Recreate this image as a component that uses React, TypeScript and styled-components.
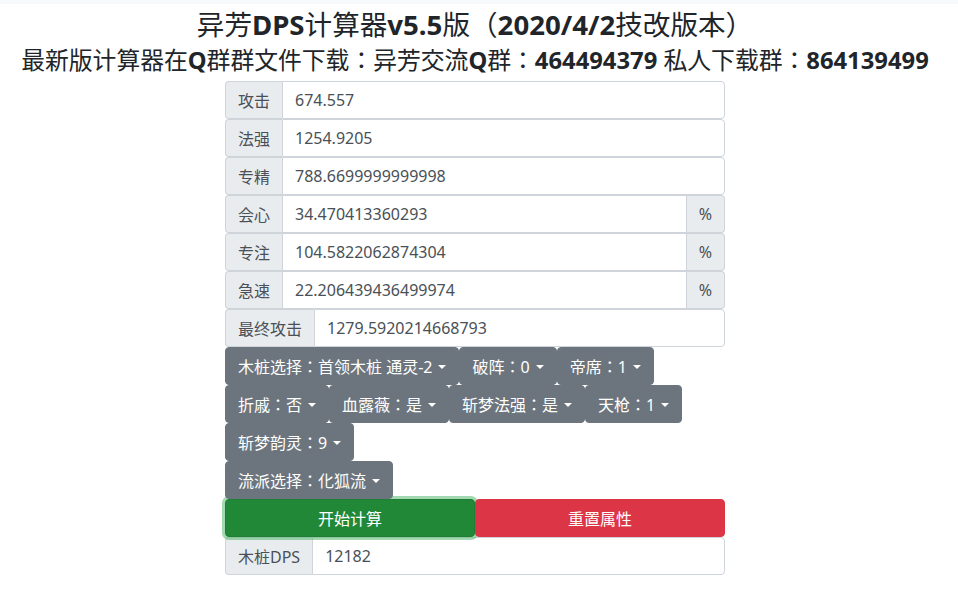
import React from 'react';
import styled, { createGlobalStyle } from 'styled-components';

const GlobalStyle = createGlobalStyle`
    body {
        margin: 0;
        background: #ffffff;
        font-family: 'Noto Sans', 'Noto Sans CJK JP', sans-serif;
        color: #212529;
    }
`;

const stats = [
    { label: '攻击', value: '674.557' },
    { label: '法强', value: '1254.9205' },
    { label: '专精', value: '788.6699999999998' },
    { label: '会心', value: '34.470413360293', unit: '%' },
    { label: '专注', value: '104.5822062874304', unit: '%' },
    { label: '急速', value: '22.206439436499974', unit: '%' },
    { label: '最终攻击', value: '1279.5920214668793' },
];

const toggles = [
    '木桩选择：首领木桩 通灵-2',
    '破阵：0',
    '帝席：1',
    '折戚：否',
    '血露薇：是',
    '斩梦法强：是',
    '天枪：1',
    '斩梦韵灵：9',
];

const App = () => {
    return (
        <Page>
            <GlobalStyle />
            <TopStrip />
            <Title>
                异芳<b>DPS</b>计算器<b>v5.5</b>版（<b>2020/4/2</b>技改版本）
            </Title>
            <SubTitle>
                最新版计算器在<b>Q</b>群群文件下载：异芳交流<b>Q</b>群：<b>464494379</b> 私人下载群：
                <b>864139499</b>
            </SubTitle>
            <Form>
                {stats.map((s) => (
                    <InputGroup key={s.label}>
                        <Addon side="left">{s.label}</Addon>
                        <Field defaultValue={s.value} rounded={!s.unit} />
                        {s.unit && <Addon side="right">{s.unit}</Addon>}
                    </InputGroup>
                ))}
                <ToggleWrap>
                    {toggles.map((t) => (
                        <Toggle key={t}>{t}</Toggle>
                    ))}
                </ToggleWrap>
                <ToggleWrap>
                    <Toggle>流派选择：化狐流</Toggle>
                </ToggleWrap>
                <ActionRow>
                    <ActionButton variant="start">开始计算</ActionButton>
                    <ActionButton variant="reset">重置属性</ActionButton>
                </ActionRow>
                <InputGroup>
                    <Addon side="left">木桩DPS</Addon>
                    <Field defaultValue="12182" rounded />
                </InputGroup>
            </Form>
        </Page>
    );
};

const Page = styled.div`
    width: 950px;
    display: flex;
    flex-direction: column;
    align-items: center;
`;

const TopStrip = styled.div`
    align-self: stretch;
    width: 958px;
    height: 4px;
    background: #f8f9fa;
`;

const Title = styled.h3`
    margin: 3px 0 0;
    font-size: 27.6px;
    line-height: 34px;
    font-weight: 400;
    white-space: nowrap;
    & b {
        font-weight: 700;
    }
`;

const SubTitle = styled.h4`
    margin: 4px 0 0;
    font-size: 23.8px;
    line-height: 30px;
    font-weight: 400;
    white-space: nowrap;
    & b {
        font-weight: 700;
    }
`;

const Form = styled.div`
    width: 500px;
    margin-top: 6px;
    display: flex;
    flex-direction: column;
`;

const InputGroup = styled.div`
    display: flex;
    height: 38px;
    font-size: 16px;
`;

const Addon = styled.span<{ side: 'left' | 'right' }>`
    display: flex;
    align-items: center;
    padding: 0 12px;
    background: #e9ecef;
    border: 1px solid #ced4da;
    color: #495057;
    white-space: nowrap;
    border-radius: ${(p) => (p.side === 'left' ? '4px 0 0 4px' : '0 4px 4px 0')};
    ${(p) => (p.side === 'left' ? 'border-right: none;' : 'border-left: none;')}
`;

const Field = styled.input<{ rounded?: boolean }>`
    flex: 1;
    min-width: 0;
    box-sizing: border-box;
    height: 38px;
    padding: 0 12px;
    border: 1px solid #ced4da;
    border-radius: ${(p) => (p.rounded ? '0 4px 4px 0' : '0')};
    font-family: inherit;
    font-size: 16px;
    color: #495057;
    outline: none;
`;

const ToggleWrap = styled.div`
    display: flex;
    flex-wrap: wrap;
    position: relative;
    z-index: 1;
`;

const Toggle = styled.button`
    position: relative;
    height: 38px;
    padding: 0 12px;
    background: #6c757d;
    border: 1px solid #6c757d;
    border-radius: 4px;
    color: #ffffff;
    font-family: inherit;
    font-size: 16px;
    white-space: nowrap;
    &::after {
        content: '';
        display: inline-block;
        margin-left: 6px;
        vertical-align: 0.255em;
        border-top: 0.3em solid;
        border-right: 0.3em solid transparent;
        border-left: 0.3em solid transparent;
    }
`;

const ActionRow = styled.div`
    display: flex;
`;

const ActionButton = styled.button<{ variant: 'start' | 'reset' }>`
    flex: 1;
    position: relative;
    height: 38px;
    border-radius: 4px;
    color: #ffffff;
    font-family: inherit;
    font-size: 16px;
    background: ${(p) => (p.variant === 'start' ? '#218838' : '#dc3545')};
    border: 1px solid ${(p) => (p.variant === 'start' ? '#1e7e34' : '#dc3545')};
    box-shadow: ${(p) => (p.variant === 'start' ? '0 0 0 3px rgba(72, 180, 97, 0.5)' : 'none')};
    z-index: ${(p) => (p.variant === 'start' ? 0 : 1)};
`;

export default App;
